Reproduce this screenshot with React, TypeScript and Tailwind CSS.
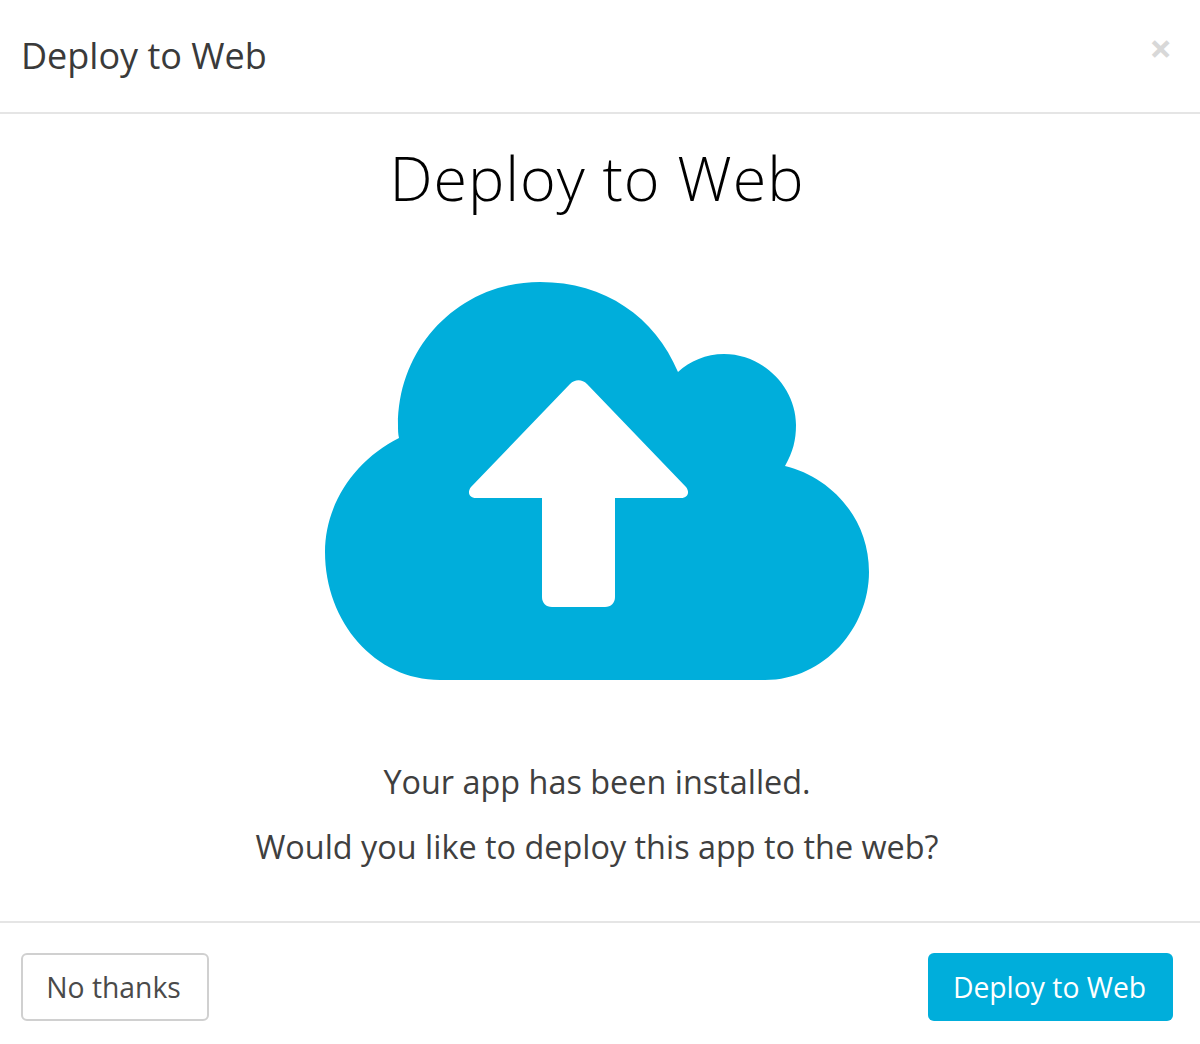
const FONT = "font-['Open_Sans','Liberation_Sans',sans-serif]";

function CloudUpload() {
  return (
    <svg width="544" height="398" viewBox="0 0 544 398" className="block">
      <path
        fill="#00aedb"
        d="M115 398H440C500 398 544 345 544 290C544 235 505 195 460 184C468 170 471 158 471 143C471 105 438 72 399 72C381 72 365 79 353 90C330 35 280 0 215 0C135 0 73 64 73 143C73 148 73 152 74 156C30 178 0 222 0 270C0 340 50 398 115 398Z"
      />
      <path
        fill="#fff"
        d="M245 102C250 97 257 97 262 102L361 205C365 210 363 216 356 216H290V315C290 321 286 325 280 325H227C221 325 217 321 217 315V216H151C144 216 142 210 146 205Z"
      />
    </svg>
  );
}

export default function App() {
  return (
    <div className={`${FONT} w-[1200px] h-[1044px] bg-white flex flex-col overflow-hidden`}>
      <header className="h-[114px] shrink-0 border-b-2 border-[#e5e5e5] flex items-start justify-between pl-[21px] pr-[28px]">
        <h2 className="text-[36px] leading-[46px] mt-[33px] text-[#3a3a3a] font-normal">Deploy to Web</h2>
        <span className="text-[40px] leading-[40px] mt-[28px] font-bold text-[#d8d8d8]">×</span>
      </header>

      <main className="flex-1 flex flex-col items-center pr-[6px]">
        <h1 className="text-[61px] leading-[70px] tracking-[0.95px] mt-[29px] font-light text-[#000]">Deploy to Web</h1>
        <div className="mt-[69px] mr-[1px]">
          <CloudUpload />
        </div>
        <p className="text-[32.4px] leading-[44px] mt-[79px] text-[#3f3f3f]">Your app has been installed.</p>
        <p className="text-[32.4px] leading-[44px] mt-[21px] text-[#3f3f3f]">Would you like to deploy this app to the web?</p>
      </main>

      <footer className="h-[123px] shrink-0 border-t-2 border-[#e5e5e5] flex items-start justify-between pl-[21px] pr-[27px] pt-[30px]">
        <button className="w-[188px] h-[68px] pr-[3px] rounded-md border-2 border-[#d0d0d0] bg-white text-[#4a4a4a] text-[28.3px]">
          No thanks
        </button>
        <button className="w-[245px] h-[68px] pr-[2px] rounded-md bg-[#00aedb] text-white text-[28.3px]">
          Deploy to Web
        </button>
      </footer>
    </div>
  );
}
